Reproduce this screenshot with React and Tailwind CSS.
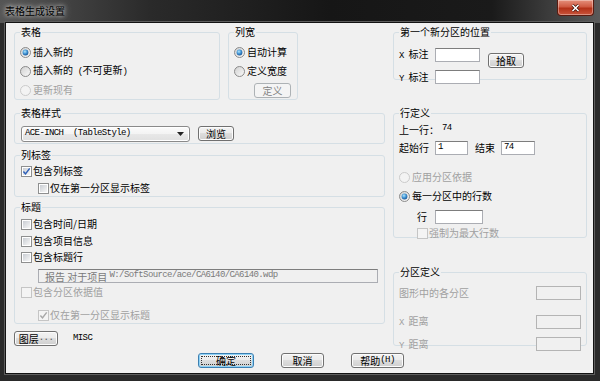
import React from "react";

const mono = "font-['Liberation_Mono',monospace] text-[9px] tracking-[-0.6px]";

function M({ children, className = "" }) {
  return <span className={`${mono} whitespace-pre ${className}`}>{children}</span>;
}

function Defs() {
  return (
    <div className="h-0 overflow-hidden">
      <svg width="0" height="0">
        <defs>
          <linearGradient id="rbg" x1="0" y1="0" x2="1" y2="1">
            <stop offset="0" stopColor="#cfcfcf" />
            <stop offset="1" stopColor="#fbfbfb" />
          </linearGradient>
          <radialGradient id="rdot" cx="0.4" cy="0.35" r="0.75">
            <stop offset="0" stopColor="#b3e6fc" />
            <stop offset="0.5" stopColor="#3e92d3" />
            <stop offset="1" stopColor="#174a88" />
          </radialGradient>
          <linearGradient id="cbg" x1="0" y1="0" x2="1" y2="1">
            <stop offset="0" stopColor="#c9cdd3" />
            <stop offset="1" stopColor="#f7f7f7" />
          </linearGradient>
        </defs>
      </svg>
    </div>
  );
}

function Radio({ checked, disabled }) {
  return (
    <svg width="11" height="11" viewBox="0 0 11 11" className="shrink-0">
      <circle cx="5.5" cy="5.5" r="5" fill={disabled ? "#f3f3f3" : "url(#rbg)"} stroke={disabled ? "#cacaca" : "#8b8b8b"} />
      {checked && <circle cx="5.5" cy="5.5" r="2.9" fill="url(#rdot)" />}
    </svg>
  );
}

function Check({ checked, disabled }) {
  return (
    <svg width="11" height="11" viewBox="0 0 11 11" className="shrink-0">
      <rect x="0.5" y="0.5" width="10" height="10" fill={disabled ? "#f4f4f4" : "#fff"} stroke={disabled ? "#c5c5c5" : "#8e8f8f"} />
      {!disabled && <rect x="2" y="2" width="7" height="7" fill="url(#cbg)" />}
      {checked && (
        <path d="M2.4 5.4 L4.5 7.9 L8.7 2.4" fill="none" stroke={disabled ? "#a8a8a8" : "#2d5fb8"} strokeWidth="1.5" />
      )}
    </svg>
  );
}

function Group({ title, className = "", children }) {
  return (
    <fieldset className={`min-w-0 rounded-[3px] border border-[#d5dfe5] px-[5px] ${className}`}>
      <legend className="px-[1px] text-[10px] leading-[14px]">{title}</legend>
      {children}
    </fieldset>
  );
}

function RadioRow({ checked, disabled, children, className = "" }) {
  return (
    <div className={`flex h-[14px] items-center gap-[2px] ${disabled ? "text-[#a0a0a0]" : ""} ${className}`}>
      <Radio checked={checked} disabled={disabled} />
      <span className="leading-[14px]">{children}</span>
    </div>
  );
}

function CheckRow({ checked, disabled, children, className = "" }) {
  return (
    <div className={`flex h-[14px] items-center gap-[1px] ${disabled ? "text-[#a0a0a0]" : ""} ${className}`}>
      <Check checked={checked} disabled={disabled} />
      <span className="leading-[14px]">{children}</span>
    </div>
  );
}

function Btn({ className = "", children, disabled, focused }) {
  const base =
    "flex h-[15px] shrink-0 items-center justify-center rounded-[3px] border text-[10px] leading-[13px]";
  const style = disabled
    ? "border-[#adb2b5] bg-[#f4f4f4] text-[#838383]"
    : focused
    ? "border-[#3c7fb1] bg-[linear-gradient(#f2f2f2,#ebebeb_50%,#dddddd_50%,#cfcfcf)] shadow-[inset_0_0_0_1px_#8fd3f7]"
    : "border-[#707070] bg-[linear-gradient(#f2f2f2,#ebebeb_50%,#dddddd_50%,#cfcfcf)] shadow-[inset_0_0_0_1px_#fcfcfc]";
  return (
    <div className={`${base} ${style} ${className}`}>
      {focused ? (
        <div className="m-[2px] flex flex-1 items-center justify-center self-stretch border border-dotted border-[#333] leading-[9px]">
          {children}
        </div>
      ) : (
        children
      )}
    </div>
  );
}

function Field({ className = "", children, disabled }) {
  return (
    <div
      className={`flex h-[14px] shrink-0 items-center border pl-[2px] ${
        disabled ? "border-[#b4b4b4] bg-[#f0f0f0]" : "border-[#abadb3] border-t-[#7d7d7d] bg-white"
      } ${className}`}
    >
      {children}
    </div>
  );
}

export default function App() {
  return (
    <div className="flex h-[381px] w-[600px] flex-col overflow-hidden bg-[#2a2a2a] font-['Noto_Sans_CJK_SC',sans-serif] text-[10px] text-black">
      {/* Title bar */}
      <div className="flex h-[23px] shrink-0 items-start bg-[linear-gradient(90deg,#555555,#2a2a2a_25%,#161616_55%,#1a1a1a_82%,#5a5a5a)]">
        <span className="ml-[5px] mt-[4px] text-[10px] leading-[13px] text-black [text-shadow:0_0_4px_rgba(255,255,255,0.85),0_0_9px_rgba(255,255,255,0.55)]">
          表格生成设置
        </span>
        <div className="ml-auto mr-[6px] flex h-[16px] w-[37px] items-center justify-center rounded-b-[4px] border border-t-0 border-[#5a1b10] bg-[linear-gradient(#e5907c,#cf5a42_45%,#b33118_55%,#c9553c)] shadow-[inset_0_0_0_1px_rgba(255,255,255,0.35)]">
          <svg width="9" height="8" viewBox="0 0 9 8">
            <path d="M1.5 1 L7.5 7 M7.5 1 L1.5 7" stroke="#3a0d05" strokeWidth="3" />
            <path d="M1.5 1 L7.5 7 M7.5 1 L1.5 7" stroke="#fff" strokeWidth="1.6" />
          </svg>
        </div>
      </div>

      {/* Body */}
      <div className="flex flex-1 pb-[8px] pl-[6px] pr-[7px]">
        <div className="flex h-[350px] w-[587px] flex-col bg-[#f0f0f0] shadow-[0_0_0_1px_#121212,0_0_0_2px_#5e5e5e]">
          <div className="flex gap-[8px] pl-[8px] pr-[6px] pt-[2px]">
            {/* Left column */}
            <div className="flex w-[371px] flex-col">
              <div className="flex gap-[8px]">
                <Group title="表格" className="h-[75px] w-[206px]">
                  <div className="flex flex-col gap-[5px] pt-[6px]">
                    <RadioRow checked>插入新的</RadioRow>
                    <RadioRow>
                      插入新的<M> (</M>不可更新<M>)</M>
                    </RadioRow>
                    <RadioRow disabled>更新现有</RadioRow>
                  </div>
                </Group>
                <Group title="列宽" className="h-[75px] w-[70px]">
                  <div className="flex flex-col gap-[5px] pt-[6px]">
                    <RadioRow checked>自动计算</RadioRow>
                    <RadioRow>定义宽度</RadioRow>
                  </div>
                  <Btn disabled className="ml-[20px] mt-[5px] w-[37px]">
                    定义
                  </Btn>
                </Group>
              </div>

              <Group title="表格样式" className="mt-[6px] h-[38px]">
                <div className="flex items-start gap-[8px] pt-[6px]">
                  <div className="ml-[1px] flex h-[16px] w-[169px] items-center rounded-[3px] border border-[#8a8a8a] bg-[linear-gradient(#fbfbfb,#f3f3f3_50%,#e8e8e8_50%,#e0e0e0)] pl-[3px] pr-[5px] shadow-[inset_0_0_0_1px_#fff]">
                    <M className="flex-1">ACE-INCH  (TableStyle)</M>
                    <svg width="7" height="4" viewBox="0 0 7 4">
                      <path d="M0 0 H7 L3.5 4 Z" fill="#222" />
                    </svg>
                  </div>
                  <Btn className="w-[36px]">浏览</Btn>
                </div>
              </Group>

              <Group title="列标签" className="mt-[4px] h-[49px]">
                <div className="flex flex-col gap-[3px] pt-[2px]">
                  <CheckRow checked className="ml-[1px]">
                    包含列标签
                  </CheckRow>
                  <CheckRow className="ml-[18px]">仅在第一分区显示标签</CheckRow>
                </div>
              </Group>

              <Group title="标题" className="mt-[3px] h-[124px]">
                <div className="flex flex-col pt-[3px]">
                  <CheckRow className="ml-[1px]">包含时间/日期</CheckRow>
                  <CheckRow className="ml-[1px] mt-[3px]">包含项目信息</CheckRow>
                  <CheckRow className="ml-[1px] mt-[2px]">包含标题行</CheckRow>
                  <Field className="ml-[18px] mt-[5px] w-[340px] border-[#9a9a9a] !bg-[#f0f0f0] pl-[6px] text-[#7a7a7a]">
                    <span className="whitespace-pre">报告 对于项目 </span>
                    <M>W:/SoftSource/ace/CA6140/CA6140.wdp</M>
                  </Field>
                  <CheckRow disabled className="ml-[1px] mt-[2px]">
                    包含分区依据值
                  </CheckRow>
                  <CheckRow disabled checked className="ml-[18px] mt-[9px]">
                    仅在第一分区显示标题
                  </CheckRow>
                </div>
              </Group>

              <div className="mt-[7px] flex items-center">
                <Btn className="w-[44px]">
                  图层<M className="text-[#555]">...</M>
                </Btn>
                <M className="ml-[15px]">MISC</M>
              </div>
            </div>

            {/* Right column */}
            <div className="flex w-[194px] flex-col">
              <Group title="第一个新分区的位置" className="h-[55px]">
                <div className="flex items-start pt-[7px]">
                  <div className="flex flex-col gap-[5px]">
                    <div className="flex items-center">
                      <div className="w-[36px]">
                        <M>X </M>标注
                      </div>
                      <Field className="w-[45px]" />
                    </div>
                    <div className="flex items-center">
                      <div className="w-[36px]">
                        <M>Y </M>标注
                      </div>
                      <Field className="w-[45px]" />
                    </div>
                  </div>
                  <Btn className="ml-[8px] mt-[7px] w-[36px]">拾取</Btn>
                </div>
              </Group>

              <Group title="行定义" className="mt-[26px] h-[132px]">
                <div className="flex flex-col pt-[2px]">
                  <div className="flex h-[14px] items-center">
                    <span>上一行：</span>
                    <M className="ml-[3px]">74</M>
                  </div>
                  <div className="mt-[4px] flex items-center">
                    <span className="w-[36px]">起始行</span>
                    <Field className="w-[33px]">
                      <M>1</M>
                    </Field>
                    <span className="ml-[7px] w-[26px]">结束</span>
                    <Field className="w-[34px]">
                      <M>74</M>
                    </Field>
                  </div>
                  <RadioRow disabled className="mt-[15px]">
                    应用分区依据
                  </RadioRow>
                  <RadioRow checked className="mt-[5px]">
                    每一分区中的行数
                  </RadioRow>
                  <div className="ml-[18px] mt-[6px] flex items-center">
                    <span className="w-[18px]">行</span>
                    <Field className="w-[48px]" />
                  </div>
                  <CheckRow disabled className="ml-[18px] mt-[2px] h-[13px]">
                    强制为最大行数
                  </CheckRow>
                </div>
              </Group>

              <Group title="分区定义" className="mt-[27px] h-[81px]">
                <div className="flex flex-col pt-[6px] text-[#a0a0a0]">
                  <div className="flex items-center justify-between">
                    <span>图形中的各分区</span>
                    <Field disabled className="w-[45px]" />
                  </div>
                  <div className="mt-[13px] flex items-center justify-between">
                    <span>
                      <M>X </M>距离
                    </span>
                    <Field disabled className="w-[45px]" />
                  </div>
                  <div className="mt-[5px] flex items-center justify-between">
                    <span>
                      <M>Y </M>距离
                    </span>
                    <Field disabled className="w-[45px]" />
                  </div>
                </div>
              </Group>
            </div>
          </div>

          {/* Bottom buttons */}
          <div className="mt-[7px] flex pl-[192px]">
            <Btn focused className="w-[56px]">
              确定
            </Btn>
            <Btn className="ml-[27px] w-[43px]">取消</Btn>
            <Btn className="ml-[27px] w-[53px]">
              帮助<M>(H)</M>
            </Btn>
          </div>
        </div>
      </div>
      <Defs />
    </div>
  );
}
